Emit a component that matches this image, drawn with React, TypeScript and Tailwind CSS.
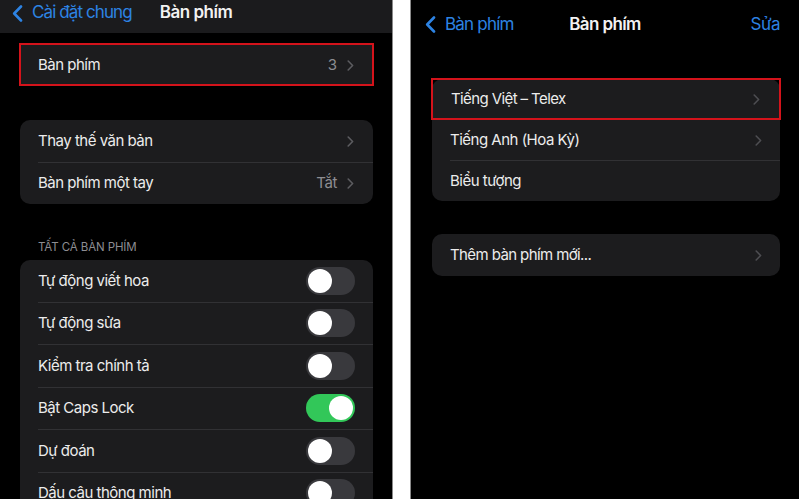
import React from 'react';

const font = { fontFamily: 'Inter, "Noto Sans", sans-serif' };

function Chevron({ className = '' }: { className?: string }) {
  return (
    <svg width="7" height="11" viewBox="0 0 7 11" className={className} fill="none">
      <polyline points="1.2,1 5.6,5.5 1.2,10" stroke="currentColor" strokeWidth="1.6" strokeLinecap="round" strokeLinejoin="round" />
    </svg>
  );
}

function BackChevron() {
  return (
    <svg width="11" height="17" viewBox="0 0 11 17" fill="none">
      <polyline points="9,1.5 2.2,8.5 9,15.5" stroke="currentColor" strokeWidth="2.6" strokeLinecap="round" strokeLinejoin="round" />
    </svg>
  );
}

function Toggle({ on = false }: { on?: boolean }) {
  return (
    <div
      className={`w-[49px] h-[28px] rounded-full p-[2px] flex items-center ${
        on ? 'bg-[#32c759] justify-end' : 'bg-[#39393d] justify-start'
      }`}
    >
      <div className="w-[24px] h-[24px] rounded-full bg-white" />
    </div>
  );
}

function Sep() {
  return <div className="ml-[18px] h-px bg-[#313134]" />;
}

const toggles: { label: string; on?: boolean }[] = [
  { label: 'Tự động viết hoa' },
  { label: 'Tự động sửa' },
  { label: 'Kiểm tra chính tả' },
  { label: 'Bật Caps Lock', on: true },
  { label: 'Dự đoán' },
  { label: 'Dấu câu thông minh' },
];

function LeftScreen() {
  return (
    <div className="w-[392px] h-full bg-black flex flex-col overflow-hidden">
      {/* nav bar */}
      <div className="h-[33px] shrink-0 bg-[#1b1b1d] pb-[7px] grid grid-cols-[1fr_auto_1fr] items-center">
        <div className="flex items-center pl-[12px] gap-[9px] text-[#2d83e3]">
          <BackChevron />
          <span className="text-[17px] tracking-[-0.9px] whitespace-nowrap">Cài đặt chung</span>
        </div>
        <span className="text-[17px] font-semibold tracking-[-0.5px] text-[#f2f2f2]">Bàn phím</span>
        <div />
      </div>

      {/* keyboards count */}
      <div className="shrink-0 mt-[10px] ml-[19px] w-[355px] h-[43px] border-2 border-[#d4131b] bg-[#1c1c1e] flex items-center pt-[2px] pl-[17px] pr-[18px]">
        <span className="flex-1 text-[15px] tracking-[-0.5px] text-[#ececec]">Bàn phím</span>
        <span className="text-[15px] text-[#8d8d92] mr-[10px]">3</span>
        <Chevron className="text-[#5c5c60]" />
      </div>

      {/* text replacement / one handed */}
      <div className="shrink-0 mt-[34px] ml-[20px] w-[353px] rounded-[10px] bg-[#1c1c1e]">
        <div className="h-[42px] flex items-center pl-[18px] pr-[19px]">
          <span className="flex-1 text-[15px] tracking-[-0.5px] text-[#ececec]">Thay thế văn bản</span>
          <Chevron className="text-[#5c5c60]" />
        </div>
        <Sep />
        <div className="h-[41px] flex items-center pl-[18px] pr-[19px]">
          <span className="flex-1 text-[15px] tracking-[-0.5px] text-[#ececec]">Bàn phím một tay</span>
          <span className="text-[15px] tracking-[-0.4px] text-[#8d8d92] mr-[10px]">Tắt</span>
          <Chevron className="text-[#5c5c60]" />
        </div>
      </div>

      <div className="shrink-0 mt-[35px] ml-[38px] h-[19px] text-[11.5px] tracking-[-0.1px] text-[#8d8d92] uppercase">
        Tất cả bàn phím
      </div>

      <div className="shrink-0 mt-[2px] ml-[20px] w-[353px] rounded-t-[10px] bg-[#1c1c1e]">
        {toggles.map((t, i) => (
          <div key={t.label}>
            {i > 0 && <Sep />}
            <div className="h-[41.5px] flex items-center pl-[18px] pr-[18px]">
              <span className="flex-1 text-[15px] tracking-[-0.5px] text-[#ececec]">{t.label}</span>
              <Toggle on={t.on} />
            </div>
          </div>
        ))}
      </div>
    </div>
  );
}

function RightScreen() {
  return (
    <div className="flex-1 h-full bg-black flex flex-col overflow-hidden">
      <div className="h-[49px] shrink-0 grid grid-cols-[1fr_auto_1fr] items-center">
        <div className="flex items-center pl-[14px] gap-[9px] text-[#2d83e3]">
          <BackChevron />
          <span className="text-[17px] tracking-[-0.8px] whitespace-nowrap">Bàn phím</span>
        </div>
        <span className="text-[17px] font-semibold tracking-[-0.6px] text-[#f2f2f2]">Bàn phím</span>
        <div className="flex justify-end pr-[19px]">
          <span className="text-[17px] tracking-[-0.5px] text-[#2d83e3]">Sửa</span>
        </div>
      </div>

      <div className="shrink-0 mt-[30px] ml-[21px] w-[348px] rounded-[10px] bg-[#1c1c1e]">
        <div className="-mx-px -mt-px h-[42px] border-2 border-[#d4131b] flex items-center pl-[18px] pr-[19px]">
          <span className="flex-1 text-[15px] tracking-[-0.6px] text-[#ececec]">Tiếng Việt – Telex</span>
          <Chevron className="text-[#4d4d51]" />
        </div>
        <div className="h-[40px] flex items-center pl-[18px] pr-[18px]">
          <span className="flex-1 text-[15px] tracking-[-0.5px] text-[#ececec]">Tiếng Anh (Hoa Kỳ)</span>
          <Chevron className="text-[#4d4d51]" />
        </div>
        <Sep />
        <div className="h-[40px] flex items-center pl-[18px] pr-[18px]">
          <span className="flex-1 text-[15px] tracking-[-0.5px] text-[#ececec]">Biểu tượng</span>
        </div>
      </div>

      <div className="shrink-0 mt-[33px] ml-[21px] w-[348px] h-[42px] rounded-[10px] bg-[#1c1c1e] flex items-center pl-[18px] pr-[18px]">
        <span className="flex-1 text-[15px] tracking-[-0.6px] text-[#ececec]">Thêm bàn phím mới...</span>
        <Chevron className="text-[#4d4d51]" />
      </div>
    </div>
  );
}

export default function App() {
  return (
    <div className="w-[799px] h-[499px] flex bg-black overflow-hidden" style={font}>
      <LeftScreen />
      <div className="w-px h-full bg-[#8a8a8a]" />
      <div className="w-[17px] h-full bg-white" />
      <div className="w-px h-full bg-[#8a8a8a]" />
      <RightScreen />
    </div>
  );
}
